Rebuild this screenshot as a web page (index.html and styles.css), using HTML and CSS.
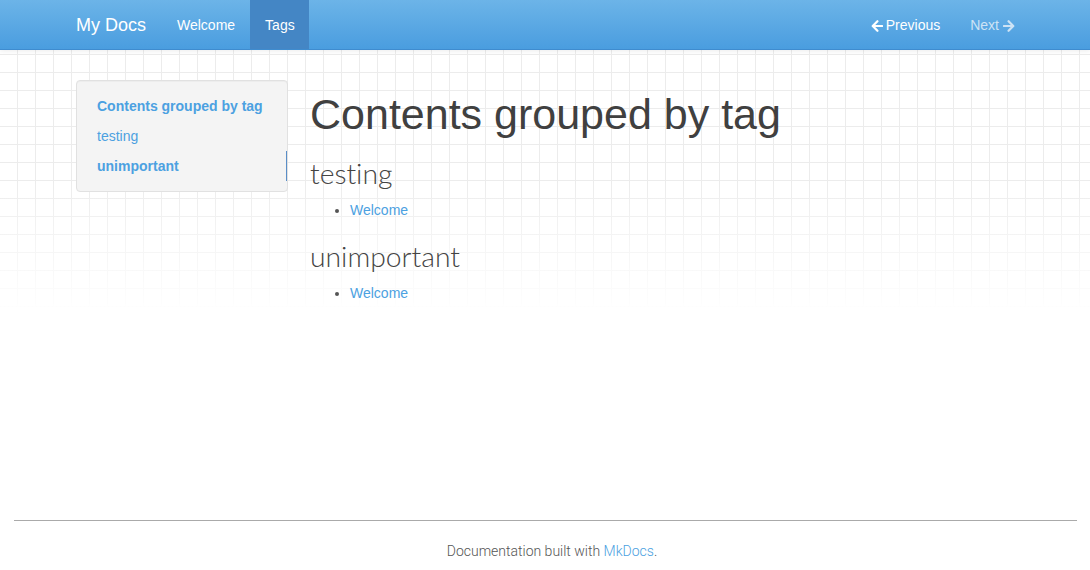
FILE: index.html
```html
<!DOCTYPE html>
<html>
<head>
<meta charset="utf-8">
<title>Tags - My Docs</title>
<link rel="stylesheet" href="styles.css">
</head>
<body>
<div class="navbar">
  <div class="nav-inner">
    <a class="brand" href="#">My Docs</a>
    <ul class="nav-links">
      <li><a href="#">Welcome</a></li>
      <li class="active"><a href="#">Tags</a></li>
    </ul>
    <ul class="nav-right">
      <li><a href="#"><svg class="arrow" viewBox="0 0 14 14" width="12" height="12"><path d="M7.5 1.5 L2 7 L7.5 12.5 M2.5 7 H13" fill="none" stroke="currentColor" stroke-width="2.6" stroke-linejoin="round" stroke-linecap="round"/></svg>Previous</a></li>
      <li class="disabled"><a href="#">Next<svg class="arrow after" viewBox="0 0 14 14" width="12" height="12"><path d="M6.5 1.5 L12 7 L6.5 12.5 M11.5 7 H1" fill="none" stroke="currentColor" stroke-width="2.6" stroke-linejoin="round" stroke-linecap="round"/></svg></a></li>
    </ul>
  </div>
</div>
<div class="page">
  <div class="container">
    <aside class="sidebar">
      <div class="well">
        <ul class="toc">
          <li class="toc-main"><a href="#">Contents grouped by tag</a></li>
          <li><a href="#">testing</a></li>
          <li class="toc-active"><a href="#">unimportant</a></li>
        </ul>
      </div>
    </aside>
    <main class="content">
      <h1>Contents grouped by tag</h1>
      <h2>testing</h2>
      <ul class="list">
        <li><a href="#">Welcome</a></li>
      </ul>
      <h2 class="second">unimportant</h2>
      <ul class="list">
        <li><a href="#">Welcome</a></li>
      </ul>
    </main>
  </div>
</div>
<footer class="footer">
  <hr>
  <p>Documentation built with <a href="#">MkDocs</a>.</p>
</footer>
</body>
</html>
```

FILE: styles.css
```css
html, body {
  margin: 0;
  padding: 0;
}
body {
  font-family: "Liberation Sans", Arial, sans-serif;
  font-size: 14px;
  line-height: 1.43;
  color: #444;
  background: #fff;
  width: 1090px;
  height: 570px;
  overflow: hidden;
  position: relative;
}
a { color: #4ca1e1; text-decoration: none; }
ul { margin: 0; padding: 0; list-style: none; }

.navbar {
  height: 50px;
  background: linear-gradient(#6cb4e8, #4a9ddf);
  border-bottom: 1px solid #3f8ccf;
  box-shadow: 0 1px 5px rgba(0,0,0,0.08);
  position: relative;
  z-index: 2;
  box-sizing: border-box;
}
.nav-inner {
  width: 940px;
  margin: 0 auto;
  display: flex;
  align-items: stretch;
  height: 49px;
}
.brand {
  color: #fff;
  font-size: 18px;
  line-height: 51px;
  padding-right: 16px;
  margin-left: 1px;
}
.nav-links, .nav-right {
  display: flex;
}
.nav-links li a, .nav-right li a {
  display: flex;
  align-items: center;
  height: 49px;
  padding: 2px 15px 0;
  box-sizing: border-box;
  color: #fff;
  font-size: 14px;
}
.nav-links li.active a {
  background: #4486c5;
  padding-right: 14px;
}
.nav-right { margin-left: auto; margin-right: -15px; }
.nav-right li.disabled a { color: #cde3f5; }
.arrow { margin-right: 3px; }
.arrow.after { margin-left: 4px; margin-right: 0; }

.page {
  background-image:
    linear-gradient(to bottom, rgba(255,255,255,0) 0, rgba(255,255,255,0) 130px, #fff 265px),
    linear-gradient(to right, #ececec 1px, transparent 1px),
    linear-gradient(to bottom, #ececec 1px, transparent 1px);
  background-size: 100% 265px, 18px 18px, 18px 18px;
  background-position: 0 0, -1px 0, 0 5px;
  background-repeat: no-repeat, repeat, repeat;
  height: 258px;
  margin-top: -1px;
}
.container {
  width: 940px;
  margin: 0 auto;
  display: flex;
  padding-top: 31px;
  gap: 23px;
}
.sidebar { width: 212px; flex: none; margin-left: 1px; }
.well {
  background: #f4f4f4;
  border: 1px solid #e1e1e1;
  border-radius: 4px;
  box-shadow: inset 0 1px 1px rgba(0,0,0,0.03);
  padding: 10px 0;
  box-sizing: border-box;
  height: 112px;
}
.toc li a {
  display: block;
  padding: 5px 20px 5px 20px;
  line-height: 20px;
  font-size: 14px;
  color: #4ca1e1;
}
.toc-main a, .toc-active a { font-weight: bold; }
.toc-active a { border-right: 1px solid #5a8ec7; }

.content { flex: 1; margin-left: -1px; }
h1 {
  font-size: 43px;
  font-weight: normal;
  margin: 9px 0 0 0;
  line-height: 50px;
  color: #404040;
}
h2 {
  font-family: Lato, "Liberation Sans", sans-serif;
  font-variant-ligatures: none;
  font-weight: 300;
  font-size: 28.3px;
  line-height: 36px;
  margin: 16px 0 0 0;
  color: #444;
}
.list { list-style: disc; padding-left: 40px; margin: 8px 0 0 0; }
.list li { line-height: 22px; color: #555; }
.list li a { color: #4ca1e1; }
h2.second { margin-top: 17px; }

.footer {
  position: absolute;
  left: 14px;
  right: 13px;
  top: 520px;
  text-align: center;
}
.footer hr {
  border: 0;
  border-top: 1px solid #aaa;
  margin: 0;
}
.footer p {
  margin: 20px 0 0 0;
  padding-left: 13px;
  font-family: Roboto, "Liberation Sans", sans-serif;
  font-weight: 300;
  color: #555;
  font-size: 14px;
}
```
